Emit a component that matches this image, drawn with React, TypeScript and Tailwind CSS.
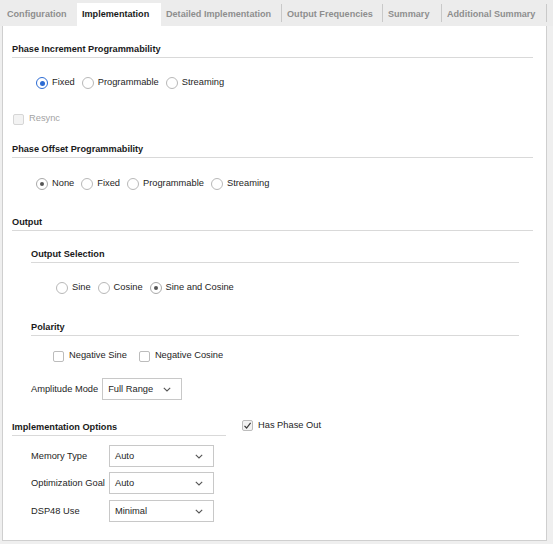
import React from "react";

const FONT = { fontFamily: '"Liberation Sans", Arial, sans-serif' };

function Tab({ label, w, active, sep }: { label: string; w: number; active?: boolean; sep?: boolean }) {
  return (
    <div
      className={
        "relative flex items-center pl-[5px] text-[9.1px] font-bold " +
        (active ? "bg-white text-[#1a1a1a] h-[23px] mt-[3px] pt-[0px]" : "text-[#8e8e8e] h-[26px] pt-[3px]")
      }
      style={{ width: w }}
    >
      {label}
      {sep && <div className="absolute right-0 top-[4px] h-[18px] w-px bg-[#c9c9c9]" />}
    </div>
  );
}

function Heading({ children, className = "" }: { children: React.ReactNode; className?: string }) {
  return (
    <div className={"h-[16px] pt-[1px] border-b border-[#d9d9d9] flex items-center text-[9.2px] font-bold text-[#1a1a1a] " + className}>
      {children}
    </div>
  );
}

function Radio({ state }: { state: "blue" | "gray" | "off" }) {
  if (state === "blue")
    return (
      <span className="w-[12px] h-[12px] rounded-full border-[1.5px] border-[#2c6bd3] bg-white flex items-center justify-center shrink-0">
        <span className="w-[5px] h-[5px] rounded-full bg-[#2c6bd3]" />
      </span>
    );
  if (state === "gray")
    return (
      <span className="w-[12px] h-[12px] rounded-full border border-[#a9a9a9] bg-white flex items-center justify-center shrink-0">
        <span className="w-[4px] h-[4px] rounded-full bg-[#555]" />
      </span>
    );
  return <span className="w-[12px] h-[12px] rounded-full border border-[#b8b8b8] bg-white shrink-0" />;
}

function RadioRow({ items, sel, selState, className = "" }: { items: string[]; sel: number; selState: "blue" | "gray"; className?: string }) {
  return (
    <div className={"h-[20px] pt-[2px] flex items-center gap-[7px] text-[9.3px] text-[#1e1e1e] " + className}>
      {items.map((t, i) => (
        <div key={t} className="flex items-center gap-[4px]">
          <Radio state={i === sel ? selState : "off"} />
          <span>{t}</span>
        </div>
      ))}
    </div>
  );
}

function Checkbox({ checked, disabled }: { checked?: boolean; disabled?: boolean }) {
  return (
    <span
      className={
        "w-[11px] h-[11px] rounded-[2px] border flex items-center justify-center shrink-0 " +
        (disabled ? "border-[#d6d6d6] bg-[#f3f3f3]" : checked ? "border-[#bcbcbc] bg-[#f2f2f2]" : "border-[#bcbcbc] bg-white")
      }
    >
      {checked && (
        <svg width="9" height="9" viewBox="0 0 9 9">
          <path d="M1.5 4.8 L3.6 7 L7.6 1.8" fill="none" stroke="#3a3a3a" strokeWidth="1.2" />
        </svg>
      )}
    </span>
  );
}

function Select({ value, w }: { value: string; w: number }) {
  return (
    <div
      className="h-[22px] border border-[#c8c8c8] bg-white flex items-center justify-between pl-[5px] pr-[10px] pt-[1px] text-[9.3px] text-[#1e1e1e]"
      style={{ width: w }}
    >
      <span>{value}</span>
      <svg width="8" height="5" viewBox="0 0 8 5">
        <path d="M0.8 0.8 L4 4 L7.2 0.8" fill="none" stroke="#555" strokeWidth="1.1" />
      </svg>
    </div>
  );
}

export default function App() {
  return (
    <div className="w-[553px] h-[544px] bg-[#efefef] overflow-hidden" style={FONT}>
      <div className="h-[26px] flex bg-[#ececec] pl-[2px]">
        <Tab label="Configuration" w={75} />
        <Tab label="Implementation" w={84} active />
        <Tab label="Detailed Implementation" w={121} sep />
        <Tab label="Output Frequencies" w={101} sep />
        <Tab label="Summary" w={59} sep />
        <Tab label="Additional Summary" w={105} sep />
      </div>
      <div className="ml-[2px] w-[545px] h-[515px] border border-t-0 border-[#cfcfcf] bg-white pl-[9px] pr-[13px] flex flex-col">
        <Heading className="mt-[16px]">Phase Increment Programmability</Heading>
        <RadioRow className="mt-[14px] ml-[24px]" items={["Fixed", "Programmable", "Streaming"]} sel={0} selState="blue" />
        <div className="mt-[16px] h-[20px] pt-[2px] ml-[1px] flex items-center gap-[5px] text-[9.3px] text-[#a3a3a3]">
          <Checkbox disabled />
          <span>Resync</span>
        </div>
        <Heading className="mt-[14px]">Phase Offset Programmability</Heading>
        <RadioRow className="mt-[15px] ml-[24px]" items={["None", "Fixed", "Programmable", "Streaming"]} sel={0} selState="gray" />
        <Heading className="mt-[22px]">Output</Heading>
        <div className="ml-[19px] mr-[14px] flex flex-col">
          <Heading className="mt-[16px]">Output Selection</Heading>
          <RadioRow className="mt-[14px] ml-[25px]" items={["Sine", "Cosine", "Sine and Cosine"]} sel={2} selState="gray" />
          <Heading className="mt-[23px]">Polarity</Heading>
          <div className="mt-[9px] h-[20px] pt-[2px] ml-[22px] flex items-center gap-[12px] text-[9.3px] text-[#1e1e1e]">
            <div className="flex items-center gap-[5px]">
              <Checkbox />
              <span>Negative Sine</span>
            </div>
            <div className="flex items-center gap-[5px]">
              <Checkbox />
              <span>Negative Cosine</span>
            </div>
          </div>
          <div className="mt-[13px] flex items-center gap-[4px] text-[9.3px] text-[#1e1e1e]">
            <span className="pt-[1px]">Amplitude Mode</span>
            <Select value="Full Range" w={80} />
          </div>
        </div>
        <div className="mt-[20px] flex items-start">
          <div className="w-[214px] flex flex-col">
            <Heading>Implementation Options</Heading>
            <div className="ml-[19px] flex flex-col text-[9.3px] text-[#1e1e1e]">
              {[
                ["Memory Type", "Auto", "mt-[9px]"],
                ["Optimization Goal", "Auto", "mt-[5px]"],
                ["DSP48 Use", "Minimal", "mt-[6px]"],
              ].map(([l, v, m]) => (
                <div key={l} className={"flex items-center " + m}>
                  <span className="w-[78px] pt-[1px]">{l}</span>
                  <Select value={v} w={105} />
                </div>
              ))}
            </div>
          </div>
          <div className="ml-[16px] -mt-[2px] h-[14px] flex items-center gap-[5px] text-[9.3px] text-[#1e1e1e]">
            <Checkbox checked />
            <span className="pt-[1px]">Has Phase Out</span>
          </div>
        </div>
      </div>
    </div>
  );
}
